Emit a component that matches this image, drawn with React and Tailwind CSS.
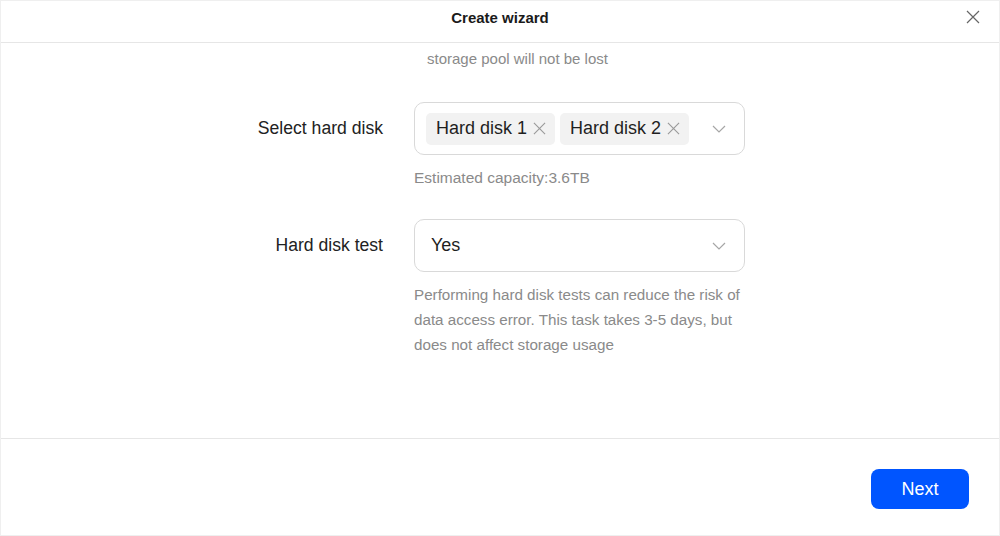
import React from 'react';

function CloseIcon({ className }) {
  return (
    <svg viewBox="0 0 14 14" className={className} fill="none" stroke="currentColor" strokeWidth="1.2">
      <path d="M1 1l12 12M13 1L1 13" />
    </svg>
  );
}

function Chevron() {
  return (
    <svg viewBox="0 0 14 8" className="w-[14px] h-[8px] text-[#a6a6a6]" fill="none" stroke="currentColor" strokeWidth="1.2">
      <path d="M1 1l6 6 6-6" />
    </svg>
  );
}

function Chip({ label }) {
  return (
    <span className="flex items-center h-[32px] pl-[10px] pr-[9px] gap-[6px] bg-[#f2f2f2] rounded-[5px] text-[18px] text-[#1f1f1f]">
      {label}
      <CloseIcon className="w-[13px] h-[13px] text-[#9a9a9a]" />
    </span>
  );
}

function Row({ label, children }) {
  return (
    <div className="flex">
      <div className="w-[382px] h-[53px] flex items-center justify-end text-[17.6px] text-[#222]">{label}</div>
      <div className="ml-[31px] w-[331px]">{children}</div>
    </div>
  );
}

export default function App() {
  return (
    <div
      className="w-[1000px] h-[536px] flex flex-col bg-white border border-[#efefef] overflow-hidden"
      style={{ fontFamily: '"Liberation Sans", Arial, sans-serif' }}
    >
      {/* header */}
      <div className="h-[42px] shrink-0 border-b border-[#e6e6e6] relative flex justify-center pt-[6px]">
        <h1 className="text-[15px] font-bold text-[#1a1a1a]">Create wizard</h1>
        <button className="absolute right-[19px] top-[9px] text-[#666]">
          <CloseIcon className="w-[14px] h-[14px]" />
        </button>
      </div>

      {/* body */}
      <div className="flex-1 overflow-hidden pt-[3px]">
        <p className="pl-[426px] text-[15px] leading-[25px] text-[#8a8a8a]">storage pool will not be lost</p>

        <div className="mt-[31px]">
          <Row label="Select hard disk">
            <div className="h-[53px] border border-[#d9d9d9] rounded-[10px] flex items-center pl-[11px] pr-[18px]">
              <div className="flex gap-[5px] flex-1">
                <Chip label="Hard disk 1" />
                <Chip label="Hard disk 2" />
              </div>
              <Chevron />
            </div>
            <p className="mt-[10px] text-[15.5px] leading-[25px] text-[#8a8a8a]">Estimated capacity:3.6TB</p>
          </Row>
        </div>

        <div className="mt-[29px]">
          <Row label="Hard disk test">
            <div className="h-[53px] border border-[#d9d9d9] rounded-[10px] flex items-center pl-[16px] pr-[18px]">
              <span className="flex-1 text-[18px] text-[#1f1f1f]">Yes</span>
              <Chevron />
            </div>
            <p className="mt-[10px] text-[15.2px] leading-[25px] text-[#8a8a8a] whitespace-nowrap">
              Performing hard disk tests can reduce the risk of
              <br />
              data access error. This task takes 3-5 days, but
              <br />
              does not affect storage usage
            </p>
          </Row>
        </div>
      </div>

      {/* footer */}
      <div className="h-[97px] shrink-0 border-t border-[#e6e6e6] flex justify-end items-start pt-[30px] pr-[30px]">
        <button className="w-[98px] h-[40px] rounded-[8px] bg-[#0055ff] text-white text-[18px]">Next</button>
      </div>
    </div>
  );
}
